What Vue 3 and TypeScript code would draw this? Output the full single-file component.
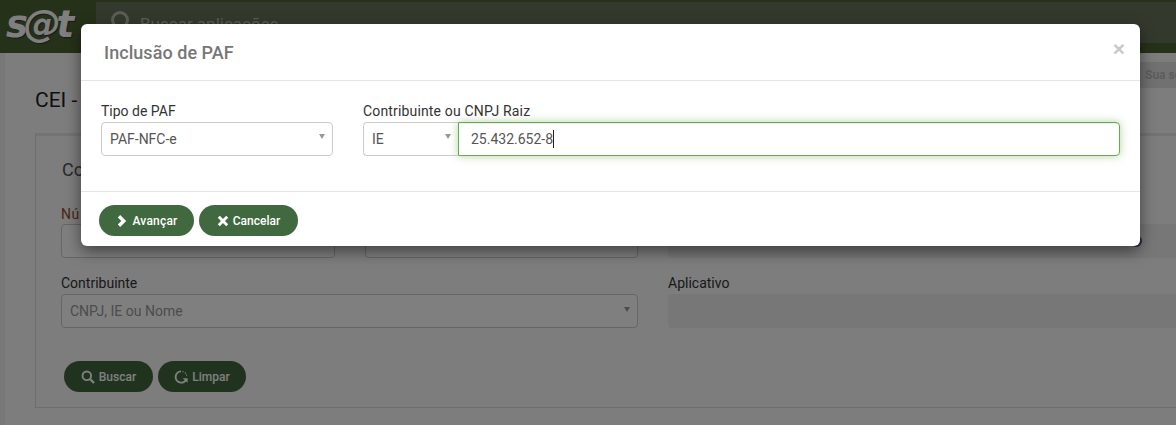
<script setup lang="ts">
const placeholder = 'CNPJ, IE ou Nome'
</script>

<template>
  <div class="screen">
    <div class="page">
      <header class="topbar">
        <div class="logo">s@t</div>
        <div class="search">
          <svg class="search-icon" viewBox="0 0 24 24" width="24" height="24"><circle cx="10" cy="10" r="7.5" fill="none" stroke="currentColor" stroke-width="3"/><path d="M15.5 15.5 22 22" stroke="currentColor" stroke-width="3.5"/></svg>
          <span>Buscar aplicações</span>
        </div>
      </header>
      <div class="notice"><span>Sua se</span></div>
      <main class="content">
        <h1>CEI -</h1>
        <section class="card">
          <h2>Co</h2>
          <div class="form-grid">
            <div class="field"><label class="req">Nú</label><div class="ctl"></div></div>
            <div class="field"><div class="spacer"></div><div class="ctl"></div></div>
            <div class="field wide"><div class="spacer"></div><div class="ctl off"><i class="radio"></i></div></div>
            <div class="field span2">
              <label>Contribuinte</label>
              <div class="ctl ph">{{ placeholder }}<b class="caret"></b></div>
            </div>
            <div class="field wide"><label>Aplicativo</label><div class="ctl off"></div></div>
          </div>
          <div class="actions page-actions">
            <button class="btn">
              <svg viewBox="0 0 14 14" width="14" height="14"><circle cx="5.8" cy="5.8" r="4.3" fill="none" stroke="currentColor" stroke-width="1.9"/><path d="m9 9 4 4" stroke="currentColor" stroke-width="2.4"/></svg>
              Buscar
            </button>
            <button class="btn">
              <svg viewBox="0 0 14 14" width="14" height="14"><path d="M12.4 9.2A5.6 5.6 0 1 1 7 1.4" fill="none" stroke="currentColor" stroke-width="1.9"/><path d="M8.5 1.6h1M10.8 3h1M12 5.2h1" stroke="currentColor" stroke-width="1.3"/><path d="M8.6 8.2h5v4.6z" fill="currentColor"/></svg>
              Limpar
            </button>
          </div>
        </section>
      </main>
    </div>

    <div class="backdrop"></div>

    <div class="modal">
      <div class="modal-head">
        <h3>Inclusão de PAF</h3>
        <span class="close">×</span>
      </div>
      <div class="modal-body">
        <div class="m-field type">
          <label>Tipo de PAF</label>
          <div class="m-ctl">PAF-NFC-e<b class="m-caret"></b></div>
        </div>
        <div class="m-field taxpayer">
          <label class="spaced">Contribuinte ou CNPJ Raiz</label>
          <div class="group">
            <div class="m-ctl left">IE<b class="m-caret"></b></div>
            <div class="m-ctl focus">25.432.652-8<i class="cursor"></i></div>
          </div>
        </div>
      </div>
      <div class="modal-foot">
        <button class="btn light">
          <svg viewBox="0 0 12 12" width="12" height="12"><path d="M3 1.2 7.8 6 3 10.8" fill="none" stroke="currentColor" stroke-width="3.4"/></svg>
          Avançar
        </button>
        <button class="btn light">
          <svg viewBox="0 0 12 12" width="12" height="12"><path d="m1.8 1.8 8.4 8.4m0-8.4-8.4 8.4" fill="none" stroke="currentColor" stroke-width="2.9"/></svg>
          Cancelar
        </button>
      </div>
    </div>
  </div>
</template>

<style>
html, body { margin: 0; }
</style>

<style scoped>
.screen {
  position: relative;
  width: 1176px;
  height: 425px;
  overflow: hidden;
  font-family: Roboto, "Liberation Sans", sans-serif;
  background: #fafafa;
}
.page { display: flex; flex-direction: column; height: 425px; padding-left: 5px; box-sizing: border-box; box-shadow: inset 5px 0 0 #f0f0f0; }
.topbar {
  margin-left: -5px;
  height: 53px;
  flex: none;
  display: flex;
  align-items: flex-start;
  background: #4c6332;
  box-sizing: border-box;
}
.logo {
  width: 96px;
  flex: none;
  box-sizing: border-box;
  padding-left: 6px;
  font: italic 700 37px/49px "DejaVu Sans", sans-serif;
  letter-spacing: -4.2px;
  color: #fff;
  text-shadow: 1px 1px 1px #333;
}
.search {
  flex: 1;
  height: 41px;
  margin-top: 2px;
  display: flex;
  align-items: center;
  gap: 6px;
  padding: 0 0 0 14px;
  background: #66755a;
  color: #b4bdac;
  font-size: 17px;
}
.search-icon { flex: none; margin-top: -2px; }
.search span { padding-top: 2px; }
.notice {
  height: 26px;
  margin-top: 9px;
  margin-bottom: -35px;
  display: flex;
  justify-content: flex-end;
  flex: none;
}
.notice span {
  width: 36px;
  box-sizing: border-box;
  white-space: nowrap;
  padding-left: 5px;
  background: #e2e2e2;
  color: #bbb;
  font-size: 12px;
  font-weight: 700;
  line-height: 26px;
}
.content { padding: 35px 0 0 30px; flex: 1; }
h1 { margin: 0; font-size: 21px; font-weight: 400; line-height: 24px; color: #1f1f1f; }
.card {
  margin-top: 21px;
  height: 275px;
  margin-right: -1px;
  box-sizing: border-box;
  border: 1px solid #ddd;
  border-top: 3px solid #e6e6e6;
  padding: 23px 26px 0 25px;
}
h2 { margin: 0 0 0 1px; font-size: 18px; font-weight: 400; line-height: 22px; color: #555; }
.form-grid {
  display: grid;
  grid-template-columns: 274px 273px 1fr;
  column-gap: 30px;
  row-gap: 16px;
  margin-top: 24px;
  margin-right: -27px;
}
.field label { display: block; font-size: 14px; line-height: 18px; height: 19px; color: #333; }
.spacer { height: 19px; }
.field:nth-child(n + 4) label { height: 20px; }
.field label.req { color: #9a4a2a; letter-spacing: 0.5px; }
.span2 { grid-column: span 2; }
.ctl {
  position: relative;
  height: 34px;
  box-sizing: border-box;
  border: 1px solid #ccc;
  border-radius: 4px;
  padding: 0 8px;
  font-size: 14px;
  line-height: 32px;
  background: #fff;
}
.ctl.ph { color: #999; }
.ctl.off { background: #eee; border: 0; border-radius: 4px 0 0 4px; }
.radio {
  position: absolute;
  left: 462px;
  top: 11px;
  width: 12px;
  height: 12px;
  box-sizing: border-box;
  border: 2px solid #4a5a78;
  border-radius: 50%;
}
.caret {
  position: absolute;
  right: 7px;
  top: 12px;
  border: 3px solid transparent;
  border-top: 5px solid #999;
  border-bottom: 0;
}
.actions { display: flex; gap: 5px; }
.page-actions { margin: 33px 0 0 3px; }
.btn {
  height: 31px;
  box-sizing: border-box;
  border: 0;
  border-radius: 16px;
  padding: 0 16px;
  display: inline-flex;
  align-items: center;
  justify-content: center;
  gap: 4px;
  background: #41673f;
  color: #fff;
  font: 500 12px Roboto, sans-serif;
}
.page-actions .btn { width: 89px; }
.page-actions .btn + .btn { width: 88px; }
.btn.light { background: #41693f; }
.backdrop { position: absolute; inset: 0; background: rgba(0, 0, 0, 0.5); }
.modal {
  position: absolute;
  left: 81px;
  top: 24px;
  width: 1059px;
  height: 222px;
  background: #fff;
  border-radius: 6px;
  box-shadow: 0 5px 15px rgba(0, 0, 0, 0.5);
  display: flex;
  flex-direction: column;
}
.modal-head {
  height: 57px;
  flex: none;
  box-sizing: border-box;
  border-bottom: 1px solid #e5e5e5;
  display: flex;
  align-items: center;
  justify-content: space-between;
  padding: 0 15px 0 23px;
}
h3 { margin: 0; font-size: 18px; font-weight: 500; letter-spacing: 0.05px; color: #777; }
.close { font: 700 21px/1 "Liberation Sans", sans-serif; color: #c8c8c8; margin-top: -8px; }
.modal-body {
  height: 111px;
  flex: none;
  box-sizing: border-box;
  display: flex;
  gap: 30px;
  padding: 20px 20px 0;
  border-bottom: 1px solid #e5e5e5;
}
.m-field label { display: block; font-size: 14px; line-height: 21px; color: #333; }
.m-field label.spaced { letter-spacing: 0.16px; }
.type { width: 232px; flex: none; }
.taxpayer { flex: 1; }
.m-ctl {
  position: relative;
  height: 34px;
  box-sizing: border-box;
  border: 1px solid #ccc;
  border-radius: 4px;
  padding: 0 8px;
  color: #555;
  font-size: 14px;
  line-height: 33px;
}
.m-caret {
  position: absolute;
  right: 7px;
  top: 11px;
  border: 3px solid transparent;
  border-top: 5px solid #999;
  border-bottom: 0;
}
.group { display: flex; }
.left { width: 95px; flex: none; padding-left: 8px; border-radius: 4px 0 0 4px; border-right: 0; }
.focus {
  flex: 1;
  padding-left: 12px;
  border-color: #6aa84f;
  border-radius: 0 4px 4px 0;
  box-shadow: inset 0 1px 1px rgba(0, 0, 0, 0.075), 0 0 8px rgba(106, 168, 79, 0.5);
}
.cursor { display: inline-block; width: 1px; height: 18px; background: #222; vertical-align: -4px; }
.modal-foot { display: flex; gap: 5px; padding: 13px 18px 0; }
.modal-foot .btn:first-child { width: 95px; letter-spacing: 0.2px; padding-left: 17px; }
.modal-foot .btn:last-child { width: 99px; }
</style>
